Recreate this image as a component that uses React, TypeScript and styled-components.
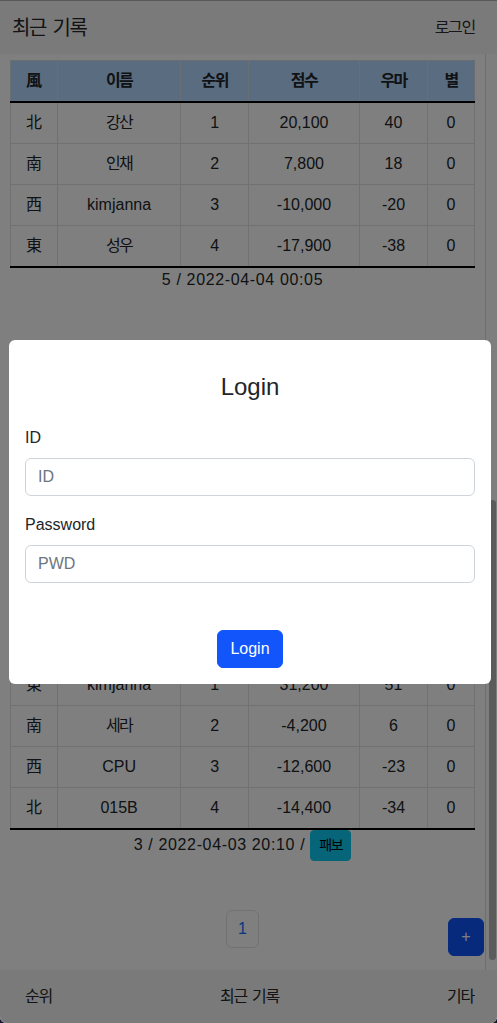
import React, { useLayoutEffect, useRef, useState } from "react";
import styled, { createGlobalStyle } from "styled-components";

const GlobalStyle = createGlobalStyle`
  html, body {
    margin: 0;
    padding: 0;
    height: 100%;
    background: #14142e;
  }
  body {
    font-family: "Liberation Sans", "Noto Sans CJK KR", sans-serif;
    font-size: 16px;
    color: #212529;
  }
  #root { height: 100%; }
  *, *::before, *::after { box-sizing: border-box; }
`;

const Root = styled.div`
  position: relative;
  height: 100vh;
  display: flex;
  flex-direction: column;
  background: #fff;
  border-radius: 0 0 6px 6px;
  overflow: hidden;
`;

const TopBar = styled.header`
  flex: 0 0 54px;
  display: flex;
  align-items: center;
  justify-content: space-between;
  padding: 0 22px 0 12px;
  background: #f5f5f5;
  border-top: 1px solid #b0b0b0;
`;

const Brand = styled.div`
  font-size: 20px;
  line-height: 30px;
  letter-spacing: -0.07em;
  word-spacing: 0.12em;
  color: #262626;
`;

const NavLink = styled.span`
  font-size: 16px;
  line-height: 24px;
  letter-spacing: -0.08em;
  color: #2c2c2c;
`;

const Middle = styled.div`
  flex: 1 1 auto;
  min-height: 0;
  display: flex;
`;

const ScrollArea = styled.main`
  flex: 1 1 auto;
  min-width: 0;
  overflow-y: scroll;
  scrollbar-width: none;
  background: #fff;
  &::-webkit-scrollbar {
    display: none;
  }
`;

const ScrollTrack = styled.div`
  flex: 0 0 12px;
  display: flex;
  flex-direction: column;
  padding: 2px 1px 10px 3px;
  background: #fcfcfc;
  border-left: 1px solid #dcdcdc;
`;

const ScrollThumb = styled.div`
  flex: 0 0 auto;
  border-radius: 4px;
  background: #b6b6b6;
`;

const Content = styled.div`
  padding: 47px 10px 22px;
`;

const GameBlock = styled.section`
  margin-bottom: 49px;
`;

const Table = styled.table`
  width: 100%;
  border-collapse: collapse;
  table-layout: fixed;
  border: 1px solid #dee2e6;
`;

const Th = styled.th<{ $ko?: boolean }>`
  background: #b4d8fe;
  padding: 8px;
  line-height: 24px;
  font-size: 16px;
  font-weight: 700;
  text-align: center;
  border: 1px solid #d4dde6;
  border-bottom: 2px solid #000;
  letter-spacing: ${(p) => (p.$ko ? "-0.1em" : "0")};
`;

const Tr = styled.tr<{ $last?: boolean }>`
  & > td {
    border-bottom: ${(p) => (p.$last ? "2px solid #000" : "1px solid #dee2e6")};
  }
`;

const Td = styled.td<{ $ko?: boolean }>`
  padding: 8px;
  line-height: 24px;
  font-size: 16px;
  text-align: center;
  border: 1px solid #dee2e6;
  letter-spacing: ${(p) => (p.$ko ? "-0.1em" : "0")};
  white-space: nowrap;
`;

const Caption = styled.div`
  text-align: center;
  line-height: 24px;
  font-size: 16px;
  letter-spacing: 0.04em;
`;

const InfoButton = styled.button`
  display: inline-block;
  vertical-align: middle;
  padding: 4px 8px;
  font-family: inherit;
  font-size: 14px;
  line-height: 21px;
  letter-spacing: -0.1em;
  color: #000;
  background: #0dcaf0;
  border: 1px solid #0dcaf0;
  border-radius: 4px;
`;

const Pagination = styled.nav`
  display: flex;
  justify-content: center;
`;

const PageLink = styled.span`
  display: block;
  padding: 6px 11px;
  line-height: 24px;
  font-size: 16px;
  color: #0d6efd;
  background: #fff;
  border: 1px solid #dee2e6;
  border-radius: 6px;
`;

const Fab = styled.button`
  position: absolute;
  right: 13px;
  bottom: 67px;
  width: 36px;
  height: 38px;
  padding: 0;
  font-family: inherit;
  font-size: 16px;
  line-height: 24px;
  color: #fff;
  background: #1155fb;
  border: 1px solid #1155fb;
  border-radius: 6px;
`;

const BottomBar = styled.footer`
  flex: 0 0 53px;
  display: flex;
  align-items: center;
  justify-content: space-between;
  padding: 0 23px 0 25px;
  background: #f5f5f5;
`;

const BottomItem = styled.span`
  font-size: 16px;
  line-height: 24px;
  letter-spacing: -0.08em;
  word-spacing: 0.12em;
  color: #262626;
`;

const Backdrop = styled.div`
  position: absolute;
  inset: 0;
  background: rgba(0, 0, 0, 0.5);
  display: flex;
  align-items: center;
  padding: 0 6px 0 9px;
`;

const ModalCard = styled.div`
  width: 100%;
  background: #fff;
  border-radius: 6px;
  padding: 32px 16px 16px;
  display: flex;
  flex-direction: column;
`;

const ModalTitle = styled.h4`
  margin: 0 0 24px;
  font-size: 24px;
  line-height: 29px;
  font-weight: 500;
  text-align: center;
  color: #212529;
`;

const Field = styled.div`
  margin-bottom: 16px;
`;

const Label = styled.label`
  display: block;
  font-size: 16px;
  line-height: 24px;
  margin-bottom: 8px;
  padding-top: 1px;
`;

const Input = styled.input`
  display: block;
  width: 100%;
  height: 38px;
  padding: 6px 12px;
  font-family: inherit;
  font-size: 16px;
  line-height: 24px;
  color: #212529;
  background: #fff;
  border: 1px solid #ced4da;
  border-radius: 6px;
  outline: none;
  &::placeholder {
    color: #6c757d;
  }
`;

const SubmitButton = styled.button`
  align-self: center;
  margin-top: 31px;
  padding: 6px 12px;
  font-family: inherit;
  font-size: 16px;
  line-height: 24px;
  color: #fff;
  background: #1155fb;
  border: 1px solid #1155fb;
  border-radius: 6px;
`;

type Row = (string | number)[];
type Game = { no: number; date: string; rows: Row[]; paifu?: boolean };

const games: Game[] = [
  {
    no: 8,
    date: "2022-04-05 21:30",
    rows: [
      ["東", "성우", 1, "42,300", "62", "1"],
      ["南", "강산", 2, "8,100", "18", "0"],
      ["西", "인채", 3, "-14,700", "-25", "0"],
      ["北", "kimjanna", 4, "-35,700", "-55", "0"],
    ],
  },
  {
    no: 7,
    date: "2022-04-05 19:12",
    rows: [
      ["南", "세라", 1, "25,400", "45", "0"],
      ["西", "성우", 2, "3,600", "14", "0"],
      ["東", "015B", 3, "-9,800", "-20", "0"],
      ["北", "CPU", 4, "-19,200", "-39", "0"],
    ],
  },
  {
    no: 6,
    date: "2022-04-04 22:48",
    rows: [
      ["西", "kimjanna", 1, "18,900", "39", "0"],
      ["北", "인채", 2, "6,200", "16", "0"],
      ["東", "강산", 3, "-7,400", "-17", "0"],
      ["南", "세라", 4, "-17,700", "-38", "0"],
    ],
  },
  {
    no: 5,
    date: "2022-04-04 00:05",
    rows: [
      ["北", "강산", 1, "20,100", "40", "0"],
      ["南", "인채", 2, "7,800", "18", "0"],
      ["西", "kimjanna", 3, "-10,000", "-20", "0"],
      ["東", "성우", 4, "-17,900", "-38", "0"],
    ],
  },
  {
    no: 4,
    date: "2022-04-03 22:41",
    rows: [
      ["東", "세라", 1, "28,500", "48", "0"],
      ["北", "CPU", 2, "2,300", "12", "0"],
      ["南", "015B", 3, "-11,300", "-21", "0"],
      ["西", "kimjanna", 4, "-19,500", "-39", "0"],
    ],
  },
  {
    no: 3,
    date: "2022-04-03 20:10",
    paifu: true,
    rows: [
      ["東", "kimjanna", 1, "31,200", "51", "0"],
      ["南", "세라", 2, "-4,200", "6", "0"],
      ["西", "CPU", 3, "-12,600", "-23", "0"],
      ["北", "015B", 4, "-14,400", "-34", "0"],
    ],
  },
];

const headers = ["風", "이름", "순위", "점수", "우마", "별"];
const colWidths = ["10.1%", "26.6%", "14.6%", "23.9%", "14.7%", "10.1%"];
const isKo = (s: string) => /[\uac00-\ud7a3]/.test(s);

function GameTable({ game }: { game: Game }) {
  return (
    <GameBlock>
      <Table>
        <colgroup>
          {colWidths.map((w, i) => (
            <col key={i} style={{ width: w }} />
          ))}
        </colgroup>
        <thead>
          <tr>
            {headers.map((h) => (
              <Th key={h} $ko={isKo(h)}>
                {h}
              </Th>
            ))}
          </tr>
        </thead>
        <tbody>
          {game.rows.map((r, i) => (
            <Tr key={i} $last={i === game.rows.length - 1}>
              {r.map((c, j) => (
                <Td key={j} $ko={isKo(String(c))}>
                  {c}
                </Td>
              ))}
            </Tr>
          ))}
        </tbody>
      </Table>
      <Caption>
        {game.no} / {game.date}
        {game.paifu ? " / " : ""}
        {game.paifu && <InfoButton>패보</InfoButton>}
      </Caption>
    </GameBlock>
  );
}

export default function App() {
  const scrollRef = useRef<HTMLElement>(null);
  const trackRef = useRef<HTMLDivElement>(null);
  const [thumb, setThumb] = useState({ top: 0, height: 0 });

  useLayoutEffect(() => {
    const el = scrollRef.current;
    const track = trackRef.current;
    if (!el || !track) return;
    el.scrollTop = el.scrollHeight;
    const update = () => {
      const inner = track.clientHeight - 12;
      const h = (el.clientHeight / el.scrollHeight) * inner;
      const t = (el.scrollTop / el.scrollHeight) * inner;
      setThumb({ top: t, height: h });
    };
    update();
    el.addEventListener("scroll", update);
    return () => el.removeEventListener("scroll", update);
  }, []);

  return (
    <>
      <GlobalStyle />
      <Root>
        <TopBar>
          <Brand>최근 기록</Brand>
          <NavLink>로그인</NavLink>
        </TopBar>
        <Middle>
          <ScrollArea ref={scrollRef}>
            <Content>
              {games.map((g) => (
                <GameTable key={g.no} game={g} />
              ))}
              <Pagination>
                <PageLink>1</PageLink>
              </Pagination>
            </Content>
          </ScrollArea>
          <ScrollTrack ref={trackRef}>
            <ScrollThumb style={{ marginTop: thumb.top, height: thumb.height }} />
          </ScrollTrack>
        </Middle>
        <BottomBar>
          <BottomItem>순위</BottomItem>
          <BottomItem>최근 기록</BottomItem>
          <BottomItem>기타</BottomItem>
        </BottomBar>
        <Fab>+</Fab>
        <Backdrop>
          <ModalCard>
            <ModalTitle>Login</ModalTitle>
            <Field>
              <Label>ID</Label>
              <Input placeholder="ID" />
            </Field>
            <Field>
              <Label>Password</Label>
              <Input type="password" placeholder="PWD" />
            </Field>
            <SubmitButton>Login</SubmitButton>
          </ModalCard>
        </Backdrop>
      </Root>
    </>
  );
}
